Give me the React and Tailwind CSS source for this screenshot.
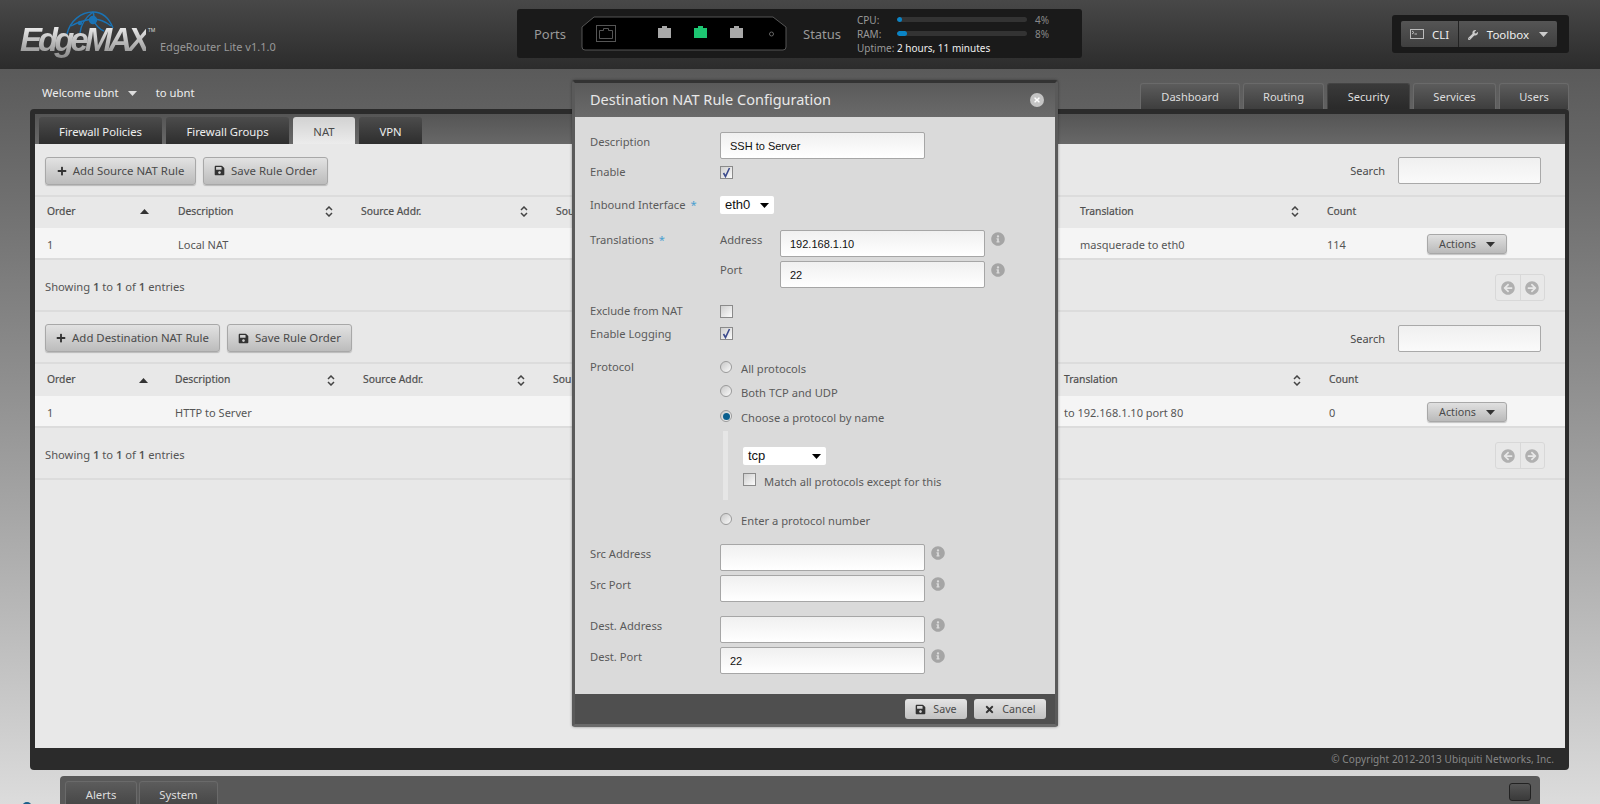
import React from "react";
import { FaPlus, FaSave, FaWrench, FaTimes, FaInfoCircle, FaArrowCircleLeft, FaArrowCircleRight } from "react-icons/fa";

const Caret = ({ className = "" }) => (
  <svg width="9" height="5" viewBox="0 0 9 5" className={className}><path d="M0 0h9L4.5 5z" fill="currentColor" /></svg>
);
const Up = () => (
  <svg width="9" height="5" viewBox="0 0 9 5"><path d="M0 5h9L4.5 0z" fill="#333" /></svg>
);
const Sort = () => (
  <svg width="8" height="11" viewBox="0 0 8 11"><path d="M1 4l3-3 3 3M1 7l3 3 3-3" fill="none" stroke="#444" strokeWidth="1.5" /></svg>
);
const Info = () => <FaInfoCircle className="text-[#a5a5a5] text-[14px]" />;

const Btn = ({ icon, children, w }) => (
  <div className={`h-[28px] ${w} gap-[6px] flex items-center justify-center rounded-[3px] border border-[#a8a8a8] bg-gradient-to-b from-[#e2e2e2] to-[#bcbcbc] text-[11.4px] text-[#4a4a4a] shadow-[0_1px_1px_rgba(0,0,0,0.2)]`}>
    {icon}
    <span>{children}</span>
  </div>
);

const Actions = () => (
  <div className="h-[20px] w-[80px] flex items-center justify-center gap-[10px] rounded-[3px] border border-[#a8a8a8] bg-gradient-to-b from-[#e0e0e0] to-[#bababa] text-[10.7px] text-[#4a4a4a] shadow-[0_1px_1px_rgba(0,0,0,0.2)]">
    <span>Actions</span>
    <Caret className="text-[#333]" />
  </div>
);

const Pager = () => (
  <div className="h-[27px] w-[50px] flex rounded-[3px] border border-[#d8d8d8] text-[#b0b0b0] text-[14px]">
    <div className="flex-1 flex items-center justify-center border-r border-[#d8d8d8]"><FaArrowCircleLeft /></div>
    <div className="flex-1 flex items-center justify-center"><FaArrowCircleRight /></div>
  </div>
);

const HCell = ({ w, children, sort, up, iconRight }) => (
  <div className={`${w} h-full flex items-center justify-between pl-[12px] ${iconRight}`}>
    <span>{children}</span>
    {sort && <Sort />}
    {up && <Up />}
  </div>
);

const NatTable = ({ addLabel, addW, saveW, toolbarH, headH, upPr, columns, row, translation, count }) => (
  <div>
    <div className={`${toolbarH} flex items-center pl-[10px] pt-[2px] border-b-2 border-[#dcdcdc]`}>
      <Btn w={addW} icon={<FaPlus className="text-[10px] text-[#333]" />}>{addLabel}</Btn>
      <div className="ml-[7px]">
        <Btn w={saveW} icon={<FaSave className="text-[11px] text-[#333]" />}>Save Rule Order</Btn>
      </div>
      <span className="ml-auto pt-[2px] text-[11px] text-[#4a4a4a]">Search</span>
      <input readOnly className="ml-[13px] mr-[24px] h-[27px] w-[143px] rounded-[2px] border border-[#a9a9a9] bg-gradient-to-b from-[#f0f0f0] to-[#fafafa]" />
    </div>
    <div className={`${headH} flex items-center text-[10.3px] text-[#4f4f4f] [-webkit-text-stroke:0.2px_#4f4f4f]`}>
      <HCell w={columns[0]} up iconRight={upPr}>Order</HCell>
      <HCell w={columns[1]} sort iconRight="pr-[16px]">Description</HCell>
      <HCell w={columns[2]} sort iconRight="pr-[16px]">Source Addr.</HCell>
      <HCell w={columns[3]}>Sou</HCell>
      <HCell w={columns[4]} sort iconRight="pr-[16px]">Translation</HCell>
      <HCell w={columns[5]}>Count</HCell>
    </div>
    <div className="h-[32px] flex items-center bg-[#f5f5f5] border-b-2 border-[#dcdcdc] text-[11px] text-[#555] pt-[2px]">
      <div className={`${columns[0]} pl-[12px] pt-[2px]`}>1</div>
      <div className={`${columns[1]} pl-[12px] pt-[2px]`}>{row}</div>
      <div className={columns[2]} />
      <div className={columns[3]} />
      <div className={`${columns[4]} pl-[12px] pt-[2px]`}>{translation}</div>
      <div className={`${columns[5]} pl-[12px] pt-[2px]`}>{count}</div>
      <Actions />
    </div>
    <div className="h-[52px] flex items-center pl-[10px] pr-[20px] pt-[5px] border-b-2 border-[#dcdcdc] text-[11.2px] text-[#555]">
      <span>Showing <b className="font-semibold">1</b> to <b className="font-semibold">1</b> of <b className="font-semibold">1</b> entries</span>
      <div className="ml-auto"><Pager /></div>
    </div>
  </div>
);

const Check = ({ on, className = "" }) => (
  <div className={`w-[13px] h-[13px] shrink-0 border border-[#8a8a8a] bg-gradient-to-br from-[#cfcfcf] to-[#fbfbfb] flex items-center justify-center ${className}`}>
    {on && (
      <svg width="9" height="11" viewBox="0 0 9 11"><path d="M1.5 6l2 3.5L7.5 1" fill="none" stroke="#3b4a8c" strokeWidth="1.6" /></svg>
    )}
  </div>
);
const Radio = ({ on }) => (
  <div className="w-[12px] h-[12px] shrink-0 rounded-full border border-[#9a9a9a] bg-gradient-to-br from-[#c8c8c8] to-[#fafafa] flex items-center justify-center">
    {on && <div className="w-[7px] h-[7px] rounded-full bg-[#0a5f8e]" />}
  </div>
);
const TextIn = ({ value = "" }) => (
  <input readOnly value={value} className="h-[27px] w-[205px] rounded-[2px] border border-[#a6a6a6] bg-gradient-to-b from-[#f0f0f0] to-white px-[9px] text-[11px] text-[#111] [font-family:'Liberation_Sans',Arial,sans-serif]" />
);
const Sel = ({ w, text }) => (
  <div className={`${w} h-[18px] bg-white rounded-[2px] flex items-center justify-between pl-[5px] pr-[5px] text-[13px] text-[#111] [font-family:'Liberation_Sans',Arial,sans-serif]`}>
    <span>{text}</span>
    <Caret className="text-black" />
  </div>
);
const Star = () => <span className="text-[#4a9fd0] ml-[5px]">*</span>;
const L = ({ children, className = "leading-[18px]" }) => (
  <div className={`w-[130px] shrink-0 h-[18px] ${className}`}>{children}</div>
);
const InfoRow = ({ label, value, mt }) => (
  <div className={`flex ${mt}`}>
    <L className="leading-[19px]">{label}</L>
    <TextIn value={value} />
    <div className="ml-[6px] mt-[2px]"><Info /></div>
  </div>
);
const RadioRow = ({ on, children, mt }) => (
  <div className={`flex items-center h-[18px] ${mt}`}>
    <div className="-mt-[4px]"><Radio on={on} /></div>
    <span className="ml-[9px]">{children}</span>
  </div>
);

const Modal = () => (
  <div className="absolute left-[572px] top-[80px] w-[486px] h-[647px] rounded-[3px] border-[3px] border-t-[#333] border-x-[#5a5a5a] border-b-[#6a6a6a] bg-[#dadada] flex flex-col text-[11.2px] text-[#5a5a5a] shadow-[0_0_3px_rgba(0,0,0,0.4)]">
    <div className="h-[34px] shrink-0 bg-gradient-to-b from-[#5a5a5a] to-[#6a6a6a] flex items-center pl-[15px] pr-[11px] text-[14.5px] text-[#e8e8e8]">
      <span>Destination NAT Rule Configuration</span>
      <div className="ml-auto w-[14px] h-[14px] rounded-full bg-[#c4c4c4] flex items-center justify-center text-[#fff] text-[8px]"><FaTimes /></div>
    </div>
    <div className="flex-1 px-[15px]">
      <div className="flex mt-[15px]"><L className="leading-[19px]">Description</L><TextIn value="SSH to Server" /></div>
      <div className="flex mt-[4px]"><L>Enable</L><Check on className="mt-[3px]" /></div>
      <div className="flex mt-[15px]"><L>Inbound Interface<Star /></L><Sel w="w-[54px]" text="eth0" /></div>
      <div className="flex mt-[16px]">
        <L className="leading-[19px]">Translations<Star /></L>
        <div>
          <div className="flex">
            <div className="w-[60px] h-[18px] leading-[19px]">Address</div>
            <TextIn value="192.168.1.10" />
            <div className="ml-[6px] mt-[2px]"><Info /></div>
          </div>
          <div className="flex mt-[4px]">
            <div className="w-[60px] h-[18px] leading-[18px]">Port</div>
            <TextIn value="22" />
            <div className="ml-[6px] mt-[2px]"><Info /></div>
          </div>
        </div>
      </div>
      <div className="flex mt-[14px]"><L>Exclude from NAT</L><Check className="mt-[3px]" /></div>
      <div className="flex mt-[5px]"><L>Enable Logging</L><Check on className="mt-[2px]" /></div>
      <div className="flex mt-[15px]">
        <L>Protocol</L>
        <div className="mt-[2px]">
          <RadioRow>All protocols</RadioRow>
          <RadioRow mt="mt-[6px]">Both TCP and UDP</RadioRow>
          <RadioRow on mt="mt-[7px]">Choose a protocol by name</RadioRow>
          <div className="mt-[4px] ml-[3px] h-[69px] border-l-[5px] border-[#e6e6e6] pl-[15px] pt-[16px]">
            <Sel w="w-[83px]" text="tcp" />
            <div className="flex mt-[8px]">
              <Check />
              <span className="ml-[8px] leading-[18px]">Match all protocols except for this</span>
            </div>
          </div>
          <RadioRow mt="mt-[12px]">Enter a protocol number</RadioRow>
        </div>
      </div>
      <InfoRow label="Src Address" mt="mt-[14px]" />
      <InfoRow label="Src Port" mt="mt-[4px]" />
      <InfoRow label="Dest. Address" mt="mt-[14px]" />
      <InfoRow label="Dest. Port" value="22" mt="mt-[4px]" />
    </div>
    <div className="h-[30px] shrink-0 bg-[#4f4f4f] flex items-center justify-end gap-[7px] pr-[9px]">
      <div className="h-[20px] w-[62px] flex items-center justify-center gap-[7px] rounded-[3px] bg-gradient-to-b from-[#e4e4e4] to-[#c2c2c2] text-[10.7px] text-[#4a4a4a]">
        <FaSave className="text-[11px] text-[#333]" /><span>Save</span>
      </div>
      <div className="h-[20px] w-[72px] flex items-center justify-center gap-[7px] rounded-[3px] bg-gradient-to-b from-[#e4e4e4] to-[#c2c2c2] text-[10.7px] text-[#4a4a4a]">
        <FaTimes className="text-[11px] text-[#333]" /><span>Cancel</span>
      </div>
    </div>
  </div>
);

const Globe = () => (
  <svg width="48" height="24" viewBox="0 0 48 24" className="absolute left-[46px] -top-[13px]" fill="none" stroke="#1a73b5" strokeWidth="1.4">
    <path d="M1 23C4 10 15 1 27 1c9 0 16 6 20 16" />
    <path d="M5 15c7-4 14-6 22-7 6 0 13 3 18 7" />
    <path d="M27 1c-7 5-12 12-13 21M27 1c1 2 1 5 0 7 2 5 6 10 11 12" />
    <circle cx="27" cy="9" r="3.5" fill="#1a73b5" />
    <circle cx="14" cy="12" r="1.5" fill="#1a73b5" />
  </svg>
);

const StatusBar = ({ label, pct, value }) => (
  <div className="flex items-center h-[14px]">
    <span className="w-[40px] text-[#999]">{label}</span>
    <div className="w-[130px] h-[5px] rounded-full bg-[#333] overflow-hidden">
      <div className="h-full bg-[#0a84c6] rounded-full" style={{ width: pct }} />
    </div>
    <span className="ml-[8px] text-[#888]">{value}</span>
  </div>
);

const PortGlyph = ({ x, fill }) => (
  <path d={`M${x} 12h4v-2h5v2h4v10h-13z`} fill={fill} />
);

const NavTab = ({ w, active, children }) => (
  <div className={`${w} h-[26px] pt-[1px] flex items-center justify-center rounded-t-[3px] border border-b-0 text-[11.1px] ${active ? "bg-gradient-to-b from-[#3a3a3a] to-[#2a2a2a] border-[#444] text-[#ddd]" : "bg-gradient-to-b from-[#5c5c5c] to-[#3e3e3e] border-[#6a6a6a] text-[#ddd]"}`}>
    {children}
  </div>
);
const SubTab = ({ w, active, children }) => (
  <div className={`${w} h-[27px] pt-[3px] flex items-center justify-center rounded-t-[3px] text-[11.3px] ${active ? "bg-gradient-to-b from-[#d2d2d2] to-[#ececec] text-[#4a4a4a]" : "bg-gradient-to-b from-[#4c4c4c] to-[#2e2e2e] text-[#eee]"}`}>
    {children}
  </div>
);

export default function App() {
  return (
    <div className="relative w-[1600px] h-[804px] overflow-hidden bg-gradient-to-b from-[#4f4f4f] to-[#dcdcdc] [font-family:'Noto_Sans','Open_Sans',sans-serif]">
      <header className="h-[69px] flex items-start bg-gradient-to-b from-[#484848] to-[#2c2c2c]">
        <div className="w-[517px] h-full flex items-start">
          <div className="relative ml-[20px] mt-[24px] w-[136px]">
            <Globe />
            <span className="relative text-[33px] leading-[32px] italic font-bold tracking-[-4px] text-transparent bg-clip-text bg-gradient-to-b from-white to-[#8a8a8a] [font-family:'Liberation_Sans',Arial,sans-serif]">
              EdgeMAX
            </span>
            <span className="absolute left-[128px] top-[3px] text-[5px] text-[#ddd]">TM</span>
          </div>
          <span className="ml-[4px] mt-[39px] text-[11px] text-[#999]">EdgeRouter Lite v1.1.0</span>
        </div>
        <div className="mt-[9px] w-[565px] h-[49px] rounded-[3px] bg-[#1a1a1a] flex items-center">
          <span className="ml-[17px] w-[47px] pt-[2px] text-[13px] text-[#999]">Ports</span>
          <svg width="206" height="35" viewBox="0 0 206 35" className="shrink-0">
            <path d="M1 11L13 1H192L205 11V31q0 3-3 3H4q-3 0-3-3z" fill="#000" stroke="#555" />
            <rect x="15.5" y="9.5" width="19" height="16" fill="none" stroke="#555" />
            <path d="M18.5 22.5v-8h4v-2h5v2h4v8z" fill="none" stroke="#555" />
            <PortGlyph x={77} fill="#a8a8a8" />
            <PortGlyph x={113} fill="#1dc672" />
            <PortGlyph x={149} fill="#a8a8a8" />
            <circle cx="190.5" cy="18" r="2" fill="none" stroke="#666" />
          </svg>
          <span className="ml-[16px] w-[54px] pt-[2px] text-[13px] text-[#999]">Status</span>
          <div className="text-[10px] leading-[14px]">
            <StatusBar label="CPU:" pct="4%" value="4%" />
            <StatusBar label="RAM:" pct="8%" value="8%" />
            <div className="h-[14px] text-[#999]">Uptime: <span className="text-[#eee]">2 hours, 11 minutes</span></div>
          </div>
        </div>
        <div className="mt-[15px] ml-[310px] w-[177px] h-[38px] rounded-[3px] bg-[#1a1a1a] flex items-center pl-[9px]">
          <div className="w-[58px] h-[26px] pt-[1px] flex items-center justify-center gap-[8px] rounded-l-[2px] bg-gradient-to-b from-[#555] to-[#3f3f3f] border-r border-[#222] text-[11.5px] text-[#eee]">
            <svg width="14" height="11" viewBox="0 0 14 11" fill="none" stroke="#bbb"><rect x="0.5" y="0.5" width="13" height="9" /><path d="M2 2l2 1.5L2 5M4.5 5H7" /></svg>
            <span>CLI</span>
          </div>
          <div className="w-[98px] h-[26px] pt-[1px] flex items-center justify-center gap-[9px] rounded-r-[2px] bg-gradient-to-b from-[#555] to-[#3f3f3f] text-[11.5px] text-[#eee]">
            <FaWrench className="text-[10px] text-[#ccc]" />
            <span>Toolbox</span>
            <Caret className="text-[#ccc] ml-[1px]" />
          </div>
        </div>
      </header>

      <div className="h-[40px] flex items-end">
        <div className="w-[1140px] h-full flex items-center pl-[42px] text-[11.3px] text-[#eee] pt-[9px]">
          <span>Welcome ubnt</span>
          <Caret className="ml-[9px] text-[#ddd]" />
          <span className="ml-[19px]">to ubnt</span>
        </div>
        <div className="flex gap-[3px]">
          <NavTab w="w-[100px]">Dashboard</NavTab>
          <NavTab w="w-[81px]">Routing</NavTab>
          <NavTab w="w-[83px]" active>Security</NavTab>
          <NavTab w="w-[83px]">Services</NavTab>
          <NavTab w="w-[70px]">Users</NavTab>
        </div>
      </div>

      <main className="ml-[30px] w-[1539px] h-[661px] rounded-[4px] bg-[#2b2b2b] pt-[5px] pl-[5px] pr-[4px] flex flex-col">
        <div className="h-[30px] shrink-0 flex items-end gap-[4px] pl-[4px] bg-gradient-to-b from-[#555] to-[#686868]">
          <SubTab w="w-[123px]">Firewall Policies</SubTab>
          <SubTab w="w-[123px]">Firewall Groups</SubTab>
          <SubTab w="w-[62px]" active>NAT</SubTab>
          <SubTab w="w-[63px]">VPN</SubTab>
        </div>
        <div className="flex-1 bg-[#e8e8e8]">
          <NatTable
            addLabel="Add Source NAT Rule" addW="w-[151px]" saveW="w-[125px]" toolbarH="h-[53px]" headH="h-[31px] pb-[2px]" upPr="pr-[17px]"
            columns={["w-[131px]", "w-[183px]", "w-[195px]", "w-[524px]", "w-[247px]", "w-[112px]"]}
            row="Local NAT" translation="masquerade to eth0" count="114"
          />
          <NatTable
            addLabel="Add Destination NAT Rule" addW="w-[175px]" saveW="w-[125px]" toolbarH="h-[52px]" headH="h-[32px]" upPr="pr-[15px]"
            columns={["w-[128px]", "w-[188px]", "w-[190px]", "w-[511px]", "w-[265px]", "w-[110px]"]}
            row="HTTP to Server" translation="to 192.168.1.10 port 80" count="0"
          />
        </div>
        <div className="h-[22px] shrink-0 flex items-center justify-end pr-[11px] text-[10px] tracking-[0.1px] text-[#888]">
          © Copyright 2012-2013 Ubiquiti Networks, Inc.
        </div>
      </main>

      <div className="mt-[6px] ml-[60px] w-[1480px] h-[40px] rounded-t-[4px] bg-[#595959] flex items-start pt-[5px] pl-[5px]">
        <div className="w-[72px] h-[28px] flex items-center justify-center rounded-t-[3px] border border-[#6a6a6a] bg-gradient-to-b from-[#5c5c5c] to-[#444] text-[11.3px] text-[#ddd]">Alerts</div>
        <div className="ml-[2px] w-[79px] h-[28px] flex items-center justify-center rounded-t-[3px] border border-[#6a6a6a] bg-gradient-to-b from-[#5c5c5c] to-[#444] text-[11.3px] text-[#ddd]">System</div>
        <div className="ml-auto mr-[9px] mt-[2px] w-[22px] h-[18px] rounded-[3px] border border-[#222] bg-gradient-to-b from-[#555] to-[#3a3a3a]" />
      </div>

      <div className="absolute left-[22px] top-[802px] w-[10px] h-[10px] rounded-full bg-[#1a5f8a]" />

      <Modal />
    </div>
  );
}
